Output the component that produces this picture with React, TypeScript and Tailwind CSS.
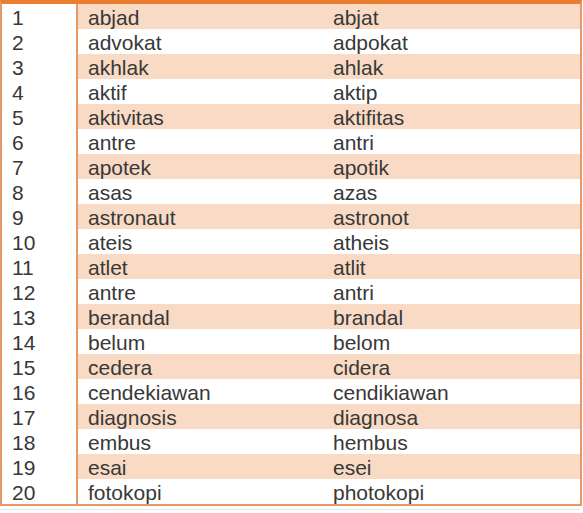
import React from "react";

const rows: [string, string][] = [
  ["abjad", "abjat"],
  ["advokat", "adpokat"],
  ["akhlak", "ahlak"],
  ["aktif", "aktip"],
  ["aktivitas", "aktifitas"],
  ["antre", "antri"],
  ["apotek", "apotik"],
  ["asas", "azas"],
  ["astronaut", "astronot"],
  ["ateis", "atheis"],
  ["atlet", "atlit"],
  ["antre", "antri"],
  ["berandal", "brandal"],
  ["belum", "belom"],
  ["cedera", "cidera"],
  ["cendekiawan", "cendikiawan"],
  ["diagnosis", "diagnosa"],
  ["embus", "hembus"],
  ["esai", "esei"],
  ["fotokopi", "photokopi"],
];

const App: React.FC = () => {
  return (
    <div
      className="w-[583px] h-[513px] bg-white overflow-hidden"
      style={{ fontFamily: '"Liberation Sans", Arial, sans-serif' }}
    >
      <div className="w-[582px] h-[506px] flex flex-col border-t-4 border-t-[#eb7d2e] border-x-2 border-b-2 border-x-[#e39a66] border-b-[#e39a66]">
        {rows.map(([baku, tidak], i) => {
          const odd = i % 2 === 0;
          return (
            <div key={i} className="flex-1 flex text-[21px] leading-none text-[#383838]">
              <div className="w-[74px] pl-[10px] pt-[3px] bg-white">{i + 1}</div>
              <div className="w-[2px] bg-[#e39a66]" />
              <div
                className={
                  "flex-1 flex pt-[3px] " + (odd ? "bg-[#f9dbc5]" : "bg-white")
                }
              >
                <div className="w-[245px] pl-[10px]">{baku}</div>
                <div className="flex-1 pl-[10px]">{tidak}</div>
              </div>
            </div>
          );
        })}
      </div>
      <div className="mt-[3px] h-[1px] w-[580px] bg-[#e6e6e6]" />
    </div>
  );
};

export default App;
